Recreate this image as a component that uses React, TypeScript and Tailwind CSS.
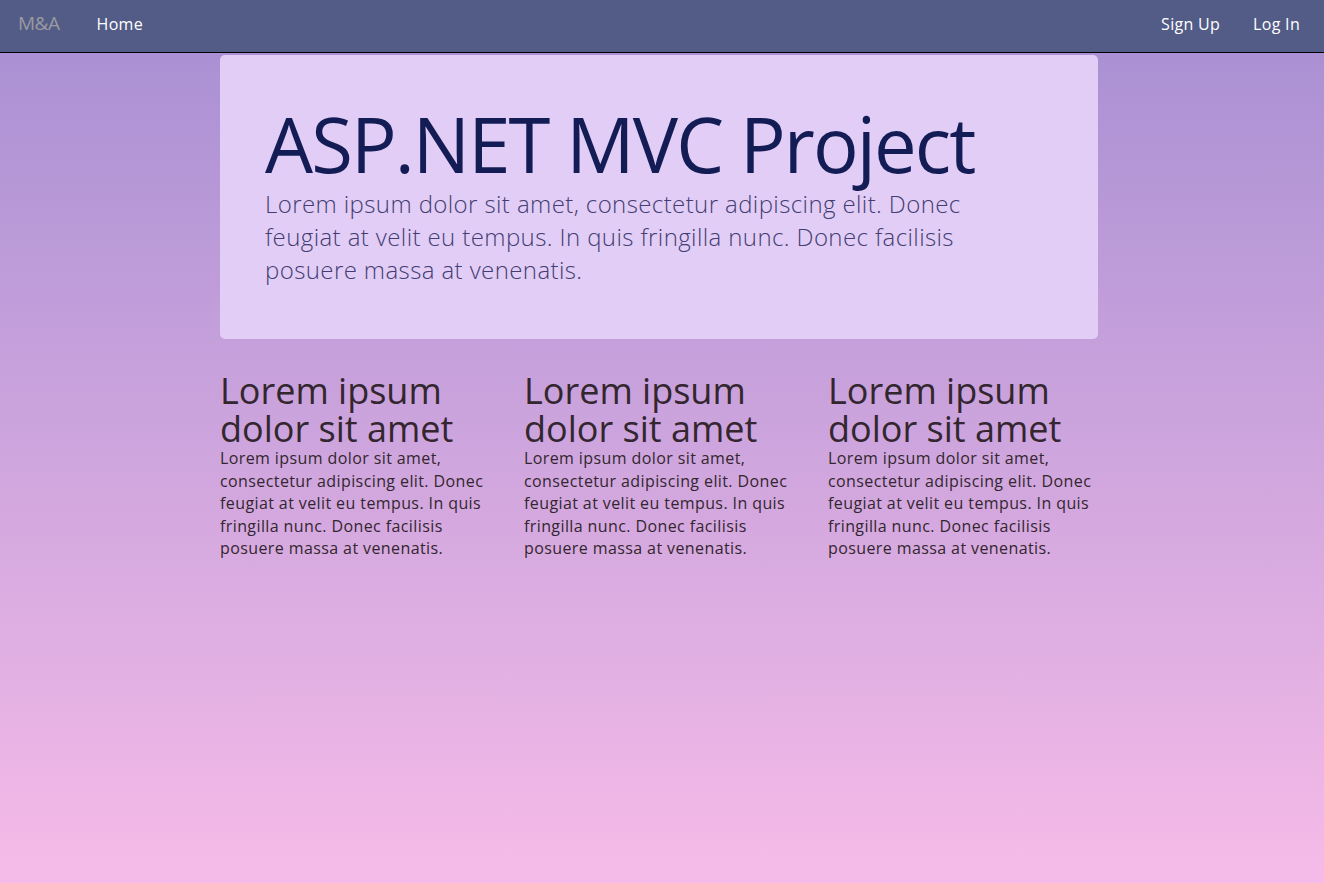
import React from 'react';

const FONT = { fontFamily: '"Open Sans", "Liberation Sans", sans-serif' };

const COLUMNS = [1, 2, 3];

const Navbar = () => (
  <nav className="h-[53px] bg-[#535c87] border-b border-black flex items-center justify-between pl-[18px] pr-6 pb-[5px]">
    <div className="flex items-center">
      <span className="text-[19px] text-[#9b9aa0] tracking-tight">M&amp;A</span>
      <a className="ml-[37px] text-[16px] text-white tracking-[0.3px]">Home</a>
    </div>
    <div className="flex items-center gap-[33px]">
      <a className="text-[16px] text-white tracking-[0.3px]">Sign Up</a>
      <a className="text-[16px] text-white tracking-[0.3px]">Log In</a>
    </div>
  </nav>
);

export default function App() {
  return (
    <div
      style={FONT}
      className="min-h-screen bg-gradient-to-b from-[#a68ed2] to-[#f6bbe8]"
    >
      <Navbar />
      <main className="ml-[220px] w-[912px] pt-[2px]">
        <div className="w-[878px] h-[284px] rounded-[5px] bg-[#e2cdf6] px-[45px] pt-[49px]">
          <h1 className="text-[76px] leading-[80px] text-[#131c54] tracking-tight">ASP.NET MVC Project</h1>
          <p className="max-w-[735px] mt-[3px] text-[24px] leading-[33px] font-light tracking-[0.4px] text-[#433d72]">
            Lorem ipsum dolor sit amet, consectetur adipiscing elit. Donec feugiat at velit eu tempus. In quis
            fringilla nunc. Donec facilisis posuere massa at venenatis.
          </p>
        </div>
        <div className="grid grid-cols-3 mt-[33px]">
          {COLUMNS.map((c) => (
            <div key={c} className="pr-[32px]">
              <h2 className="text-[36px] leading-[38px] text-[#33262f]">Lorem ipsum dolor sit amet</h2>
              <p className="-mt-[1px] text-[16px] leading-[22.5px] tracking-[0.4px] text-[#33262f]">
                Lorem ipsum dolor sit amet, consectetur adipiscing elit. Donec feugiat at velit eu tempus. In quis
                fringilla nunc. Donec facilisis posuere massa at venenatis.
              </p>
            </div>
          ))}
        </div>
      </main>
    </div>
  );
}
